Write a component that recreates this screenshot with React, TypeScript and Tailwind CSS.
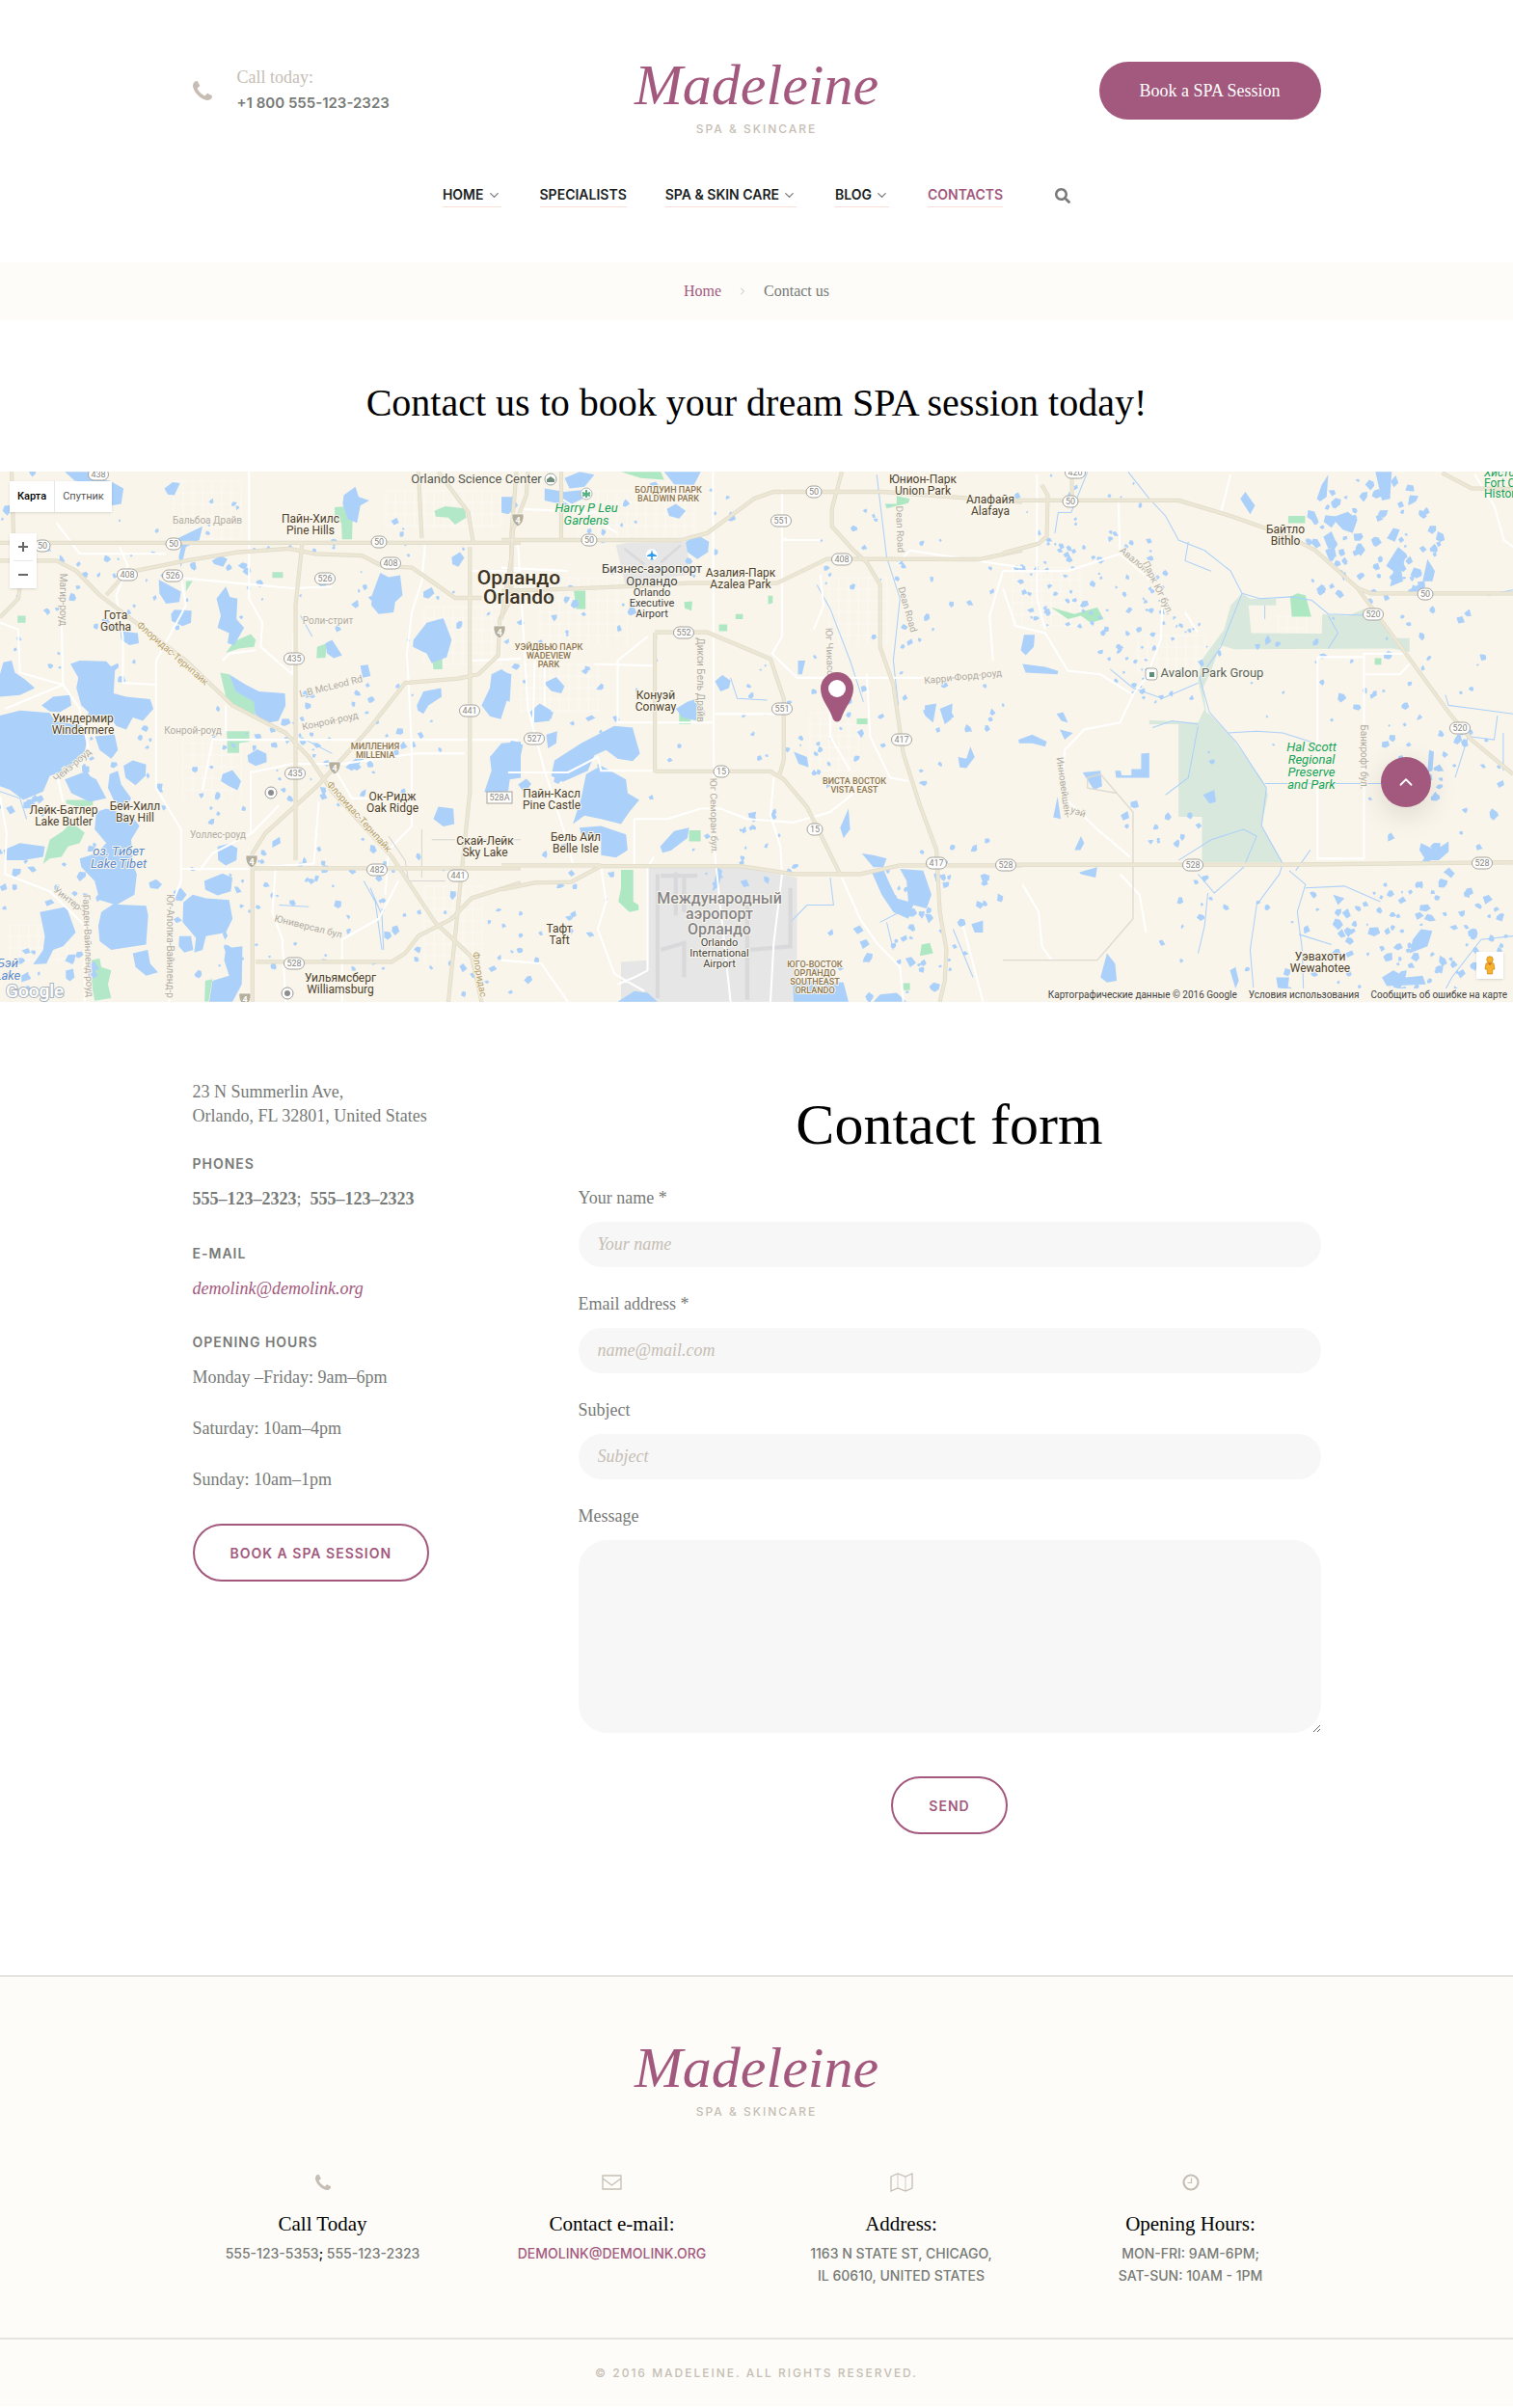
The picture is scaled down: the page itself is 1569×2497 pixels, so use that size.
import type { ReactNode } from 'react'
import { ChevronDown, ChevronRight, ChevronUp } from 'lucide-react'
import { FaSearch } from 'react-icons/fa'

const serif = "font-['Liberation_Serif',serif]"
const sans = 'font-[Inter,sans-serif]'

const navItems = [
  { label: 'HOME', sub: true },
  { label: 'SPECIALISTS' },
  { label: 'SPA & SKIN CARE', sub: true },
  { label: 'BLOG', sub: true },
  { label: 'CONTACTS', active: true },
]

/* ---------- map data ---------- */

// each tile keeps its own drawing units, the transform places it on the map
const TILES = {
  west: 'translate(0 -4) scale(.3444 .3571)',
  center: 'translate(520 -4) scale(.3444 .3571)',
  east: 'translate(1040 -4) scale(.3374 .3571)',
}

const westWater = [
  'M212 570L240 560L320 562L346 590L342 655L380 665L452 672L462 700L430 735L400 725L380 760L350 750L340 735L300 740L245 690L230 640L236 610Z',
  'M0 720L60 705L150 712L165 735L250 750L262 790L250 850L200 880L150 895L130 940L70 965L30 935L0 925Z',
  'M0 600L10 565L35 560L45 595L75 615L105 640L60 660L0 665Z',
  'M125 690L160 665L210 660L215 690L180 710L150 708Z',
  'M286 780L345 775L355 820L335 845L300 820Z',
  'M372 865L400 850L440 862L438 895L408 922L378 900Z',
  'M195 905L250 885L290 905L320 960L270 970L215 945Z',
  'M330 890L355 880L365 920L395 960L380 990L345 970L325 930Z',
  'M290 1000L320 990L395 1010L420 1040L395 1080L400 1150L412 1180L405 1240L350 1270L300 1255L285 1200L245 1160L240 1135L290 1120L320 1090L285 1050Z',
  'M305 1290L340 1268L440 1272L446 1300L440 1385L390 1392L335 1400L300 1375L296 1330Z',
  'M120 1290L200 1275L228 1350L190 1390L160 1400L140 1440L100 1442L130 1400L135 1360Z',
  'M552 1262L580 1240L620 1250L690 1255L700 1310L680 1350L620 1360L610 1400L585 1408L590 1365L550 1320Z',
  'M615 1200L670 1178L700 1190L695 1230L655 1242L618 1225Z',
  'M655 1100L690 1092L715 1105L712 1140L680 1155L657 1140Z',
  'M400 1410L445 1400L452 1440L476 1465L440 1475L408 1450Z',
  'M680 1395L730 1390L728 1500L700 1551L630 1551L640 1490L690 1475L675 1430Z',
  'M540 1360L575 1360L582 1400L555 1408L538 1390Z',
  'M522 1230L545 1220L562 1240L548 1258L525 1256Z',
  'M448 1205L470 1195L488 1210L475 1224L452 1220Z',
  'M690 600L740 630L780 650L858 655L860 690L838 735L800 742L768 715L765 680L710 650Z',
  'M652 380L680 345L692 375L715 380L712 440L735 465L705 515L685 510L690 480L655 465L665 430Z',
  'M1245 500L1285 450L1335 437L1360 500L1345 550L1300 568L1285 540L1243 520Z',
  'M1120 370L1145 305L1170 318L1205 312L1212 370L1190 390L1185 420L1140 425L1118 400Z',
  'M1450 690L1475 640L1480 600L1510 585L1532 600L1535 650L1508 730L1475 722Z',
  'M1475 840L1510 800L1568 795L1568 900L1535 905L1530 940L1458 942L1480 880Z',
  'M1305 1020L1320 984L1365 990L1368 1035L1335 1042Z',
  'M1255 690L1275 650L1328 640L1330 665L1290 690L1275 715L1258 705Z',
  'M745 835L775 818L802 830L803 855L770 866L748 855Z',
  'M670 890L700 878L726 910L715 937L690 925L665 910Z',
  'M195 12H290L300 32L330 38L372 60L365 105L335 110L320 50L225 38Z',
  'M478 325L545 360L540 390L500 395L480 365Z',
  'M515 425L525 412L577 415L575 450L550 460L517 445Z',
  'M362 475L415 480L418 510L390 515L365 500Z',
  'M535 205L610 170L600 210L560 230L545 290L538 260L545 230Z',
  'M1035 80L1070 55L1080 85L1112 95L1085 110L1075 160L1048 150L1032 105Z',
  'M495 60L520 42L542 45L525 80L505 78Z',
  'M638 270L665 255L685 265L672 288L645 280Z',
  'M1360 260L1385 245L1398 262L1380 288L1362 280Z',
  'M1275 360L1300 347L1308 365L1290 380L1275 376Z',
  'M980 510L1000 500L1030 545L1005 553L985 540Z',
  'M10 1110L60 1090L135 1100L130 1130L70 1140L20 1140Z',
  'M1085 575L1108 572L1116 605L1092 610Z',
  'M1040 870L1100 820L1108 835L1060 880Z',
  'M820 1085L842 1072L845 1090L820 1103Z',
]
const westParks = [
  'M663 595L690 600L712 650L768 680L768 720L720 705L680 665Z',
  'M683 765H751V795L720 800V828H685Z',
  'M680 538L705 505L755 483L770 500L765 520L720 525Z',
  'M1308 125L1340 112L1400 118L1404 145L1370 165L1350 145L1312 142Z',
  'M1008 115L1045 112L1062 140L1060 208H1030L1028 160L1008 150Z',
  'M955 520L985 510L980 552L953 553Z',
  'M1303 565L1332 552V585H1305Z',
  'M275 1430L300 1425L305 1450L335 1460L325 1500L335 1540L285 1548L275 1500Z',
  'M198 965H280V980L240 985L200 975Z',
  'M130 1150L150 1080L190 1055L215 1030L255 1060L240 1090L205 1100L185 1130L150 1135Z',
  'M820 303H852V320H820ZM53 430H77V450H53ZM560 330L580 328L560 360ZM618 1490L640 1485L628 1550L616 1550Z',
]
const westRoads = [
  'M0 218H1568',
  'M0 270L170 270L230 300L300 370L560 560L700 690L860 770L930 840L1000 940L1180 1130L1310 1320L1420 1420L1450 1551',
  'M320 370L380 305L560 270L720 245L870 235L950 250L1090 255L1150 285L1240 290L1300 330L1370 378L1450 378',
  'M910 220L890 400V1140',
  'M35 12L42 240L65 310L55 380L0 435',
  'M760 1551V1120L800 1060L960 920L1110 760L1220 625L1380 612L1440 600L1500 545L1505 440L1540 380V190L1555 12',
  'M760 1163H1568',
  'M770 1435H1180L1220 1410L1260 1360L1360 1310L1420 1250L1568 1205',
  'M1415 230V940L1350 1551',
  'M1260 12L1270 205M1320 12L1410 130L1425 218',
]
const westStreets = [
  'M470 930V560L560 400L545 320L880 350L1000 345',
  'M470 930L545 1050V1200L500 1310L510 1551',
  'M360 230L385 285L350 370L370 490V625L470 630',
  'M170 160L240 250H500M185 440L190 630L60 595L55 470L0 450',
  'M15 700L190 630L240 700L270 830L175 905L190 970',
  'M0 955L20 1060L15 1180L150 1230L255 1330V1551',
  'M545 1165H760M755 880V1060M755 885L880 860H1030L1250 830H1400',
  'M610 935L640 790H1560M680 690V765M670 560L690 540L770 530',
  'M750 12V380L790 450L785 520L880 600L885 480',
  'M1280 220L1270 330L1240 420L1225 540L1230 620L1240 820V1040L1170 1110L1160 1240',
  'M830 1160L820 1290L850 1370L860 1551M960 970L945 1150L780 1160',
  'M1030 1551V1370L1140 1310L1200 1200M1420 560L1568 555M1420 300H1568',
  'M600 1170L640 1120L760 1060L840 980M1010 880L1060 960H1160',
]

const centerWater = [
  'M240 800L340 750L395 755L405 790L417 830L395 852L350 845L315 820L280 835L260 880L185 912L150 895L160 850Z',
  'M255 890L300 865L375 905L380 945L415 965L385 1000L360 1035L300 1020L250 1010L215 1035L240 960Z',
  'M235 1045L300 1040L375 1065L380 1110L345 1132L300 1125L300 1080L240 1065Z',
  'M478 1100L520 1055L565 1045L560 1075L510 1112L485 1118Z',
  'M555 215L590 195L625 215L622 245L590 265L560 245Z',
  'M643 620L665 602L690 618L685 640L660 650Z',
  'M128 625L165 608L190 635L180 655L150 648Z',
  'M85 710L115 685L150 705L145 735L100 740Z',
  'M135 775L168 765L165 800L140 815Z',
  'M0 590L30 600L25 680L0 670ZM0 860L30 790L65 805L50 870L0 915Z',
  'M490 12L600 12L580 50L520 48Z',
  'M498 120L525 105L555 125L535 148L505 140Z',
  'M525 700L560 680L590 670L615 712L590 735L545 725Z',
  'M50 920L75 903L90 918L70 945Z',
  'M878 1505L905 1490L1030 1495L1045 1551L880 1551Z',
  'M1115 1175L1150 1165L1165 1200L1190 1250L1225 1260L1220 1200L1200 1165L1270 1170L1295 1240L1280 1280L1240 1270L1225 1310L1180 1290L1145 1240Z',
  'M1020 1045L1045 990L1050 1050L1030 1075Z',
  'M1085 1120L1120 1125L1160 1135L1150 1160L1120 1160Z',
  'M1275 690L1310 685L1300 740L1275 720ZM1320 700L1358 685L1355 730L1335 745Z',
  'M1380 870L1375 840L1400 845L1412 810L1425 840L1400 872Z',
  'M0 85L35 85L50 110L20 135L0 130ZM130 60L190 70L240 65L245 90L200 110L130 95Z',
  'M190 30L235 12L280 20L250 55L205 60Z',
  'M880 825L920 840L925 870L895 860ZM893 560H915L905 600H893Z',
  'M1415 1325L1450 1315V1350L1425 1350Z',
  'M635 1230L650 1160L665 1170L655 1215Z',
  'M350 1551L400 1520L440 1525L470 1551ZM1120 1551L1140 1530L1190 1525L1220 1551Z',
]
const centerParks = [
  'M360 1168H397V1260L413 1270V1285L385 1290L352 1260L360 1220Z',
  'M218 357H253V410H225Z',
  'M535 712H570V745H535ZM705 425H727V440H705ZM655 455H680V475H655ZM565 1053H600V1085H565ZM1070 728H1102V745H1070ZM1210 1497H1230V1517H1210Z',
  'M550 390L575 388L572 415L552 408ZM1155 105H1190V82L1230 90L1225 103L1160 118ZM803 372H817V393L803 397Z',
  'M360 12L480 12L490 35L420 30Z',
  'M1265 1385L1290 1380L1300 1410L1260 1418Z',
]
const centerRoads = [
  'M0 210H540L620 190L760 90L820 70H1150L1568 100',
  'M0 358L200 352L380 345L560 335H830L980 265H1100L1440 266L1568 240',
  'M1025 12L995 120V170L1060 240L1100 275L1140 340V520L1180 630L1210 830L1260 980L1310 1110L1320 1290L1340 1400L1335 1490L1320 1551',
  'M462 480V885M462 478H620L810 555L850 670V850L835 900',
  'M462 882H810L850 905L920 985L1020 1180',
  'M0 1225L100 1205L210 1203L300 1157H720L880 1180H1080L1200 1155H1568',
  'M0 1155H300M180 12V205',
  'M80 12L75 80L35 180L30 260L0 440',
]
const centerStreets = [
  'M637 12L640 1100L690 1551M50 220L80 700L130 880L190 1060L215 1150',
  'M845 60V490L815 540L890 610H1300L1470 600M640 715H845M860 205L845 210H960',
  'M400 1150V1020H500L600 990H660L740 1020L880 1030L990 1000L1080 930',
  'M460 1130L440 1160V1460L400 1480L350 1500M820 900L810 1010L840 1100L845 1180L820 1380L810 1551',
  'M1025 1190L1080 1310L1130 1380L1200 1450L1210 1551',
  'M960 310L970 400L940 470M1100 600L1110 780L1170 900L1225 910',
  'M1190 280L1230 240L1568 290M1480 560L1470 430L1510 300',
  'M20 885H200L290 840L300 880H460M280 570L460 575M130 570V690',
  'M300 1160L315 1260L290 1340L340 1470L430 1520M0 1430L120 1440L200 1551',
  'M990 700V780L1050 880M1390 1330L1450 1551M440 490L350 560V740H637',
  'M0 290L200 300M60 120L290 130M100 560L95 745M180 90L350 190',
]
const centerGround = [
  'M345 225L380 218L560 215L563 310L500 320L490 345L375 350Z',
  'M440 1160H720L890 1190V1551H360V1435L440 1430Z',
]

const eastWater = [
  'M1010 145L1060 128L1090 150L1075 190L1045 180Z',
  'M985 200L1010 185L1028 225L1000 235Z',
  'M1178 285L1215 230L1240 250L1225 300L1230 330L1190 345L1200 300Z',
  'M1290 330L1305 265L1328 300L1320 330Z',
  'M1180 205L1200 175L1220 180L1205 215Z',
  'M55 530L65 485L98 485L95 520L70 545Z',
  'M60 570L130 578L170 590L168 600L70 595Z',
  'M48 790L90 775L135 795L130 810L90 800L50 800Z',
  'M165 715L185 710L200 740L180 735ZM175 760L215 770L190 790Z',
  'M345 880H362L365 893H395V875H425V830L450 828V900H348Z',
  'M245 885L300 880L305 925L280 935Z',
  'M155 1015L168 955L178 1020Z',
  'M1285 1090L1330 1110L1370 1085L1370 1115L1340 1140L1300 1140L1280 1110Z',
  'M615 950L650 935L655 970L635 975Z',
  'M1310 820L1325 825L1320 880L1305 885Z',
  'M1145 12L1195 12L1190 90L1165 95Z',
  'M965 90L980 50L1000 20L995 85L975 98Z',
  'M1165 1480L1200 1460L1240 1480L1290 1475L1300 1500L1180 1505Z',
  'M1285 1340L1320 1345L1305 1390L1250 1410L1260 1370Z',
  'M300 1480L320 1410L345 1440L350 1490L320 1495Z',
  'M220 1110L240 1070L250 1090L238 1110ZM235 1175L290 1160L285 1190L240 1180Z',
  'M730 90L745 70L775 110L760 135ZM805 500L815 485L825 505L808 515Z',
  'M698 1460L715 1450L725 1490L715 1512ZM840 1480L880 1480L875 1515L845 1510Z',
  'M1015 1240L1050 1250L1030 1270Z',
]
const eastRoads = [
  'M0 95H540L700 140L880 200L960 240L1090 350L1130 365H1568',
  'M1090 350L1200 490L1370 710L1440 790L1568 890',
  'M0 1153H850L1568 1146',
  'M212 12V95M120 50L138 80L135 200L110 220L0 248',
  'M1350 15L1440 60L1568 62',
]
const eastStreets = [
  'M0 350L40 460L130 480L200 590L300 600L400 660L440 610L485 500L490 400M400 660L360 740L250 760L190 820L180 950L290 1050L390 1130',
  'M355 100L360 250L460 330M0 300L200 300L360 250M105 20V380L130 470',
  'M967 550V1135H1110V540H1240M1115 600H1220L1250 570M967 550H1110',
  'M1450 20L1510 110L1540 210L1568 230M700 20L670 130',
  'M60 1210L110 1290L120 1390L150 1430M560 420L600 480M360 1180L420 1240L440 1350',
]
const eastRail = ['M0 1430H290L400 1310V1000L300 890L260 900V930L350 945']
const preserve = [
  'M735 365L760 380H840V400H755L763 480L980 482L982 425L1060 430L1110 410H1150L1195 495H1250V535L1200 525L710 527L668 515L640 590L615 640L625 710L640 720L700 780L800 910L815 950L795 1040L860 1145H612V1014H540V745L450 745V733L600 740L620 700L600 620L610 560L680 470L700 400Z',
]
const rivers = [
  'M385 12L450 90L500 140L540 210L620 240L700 300L735 365L670 520L605 610L635 710L720 800L810 930L795 1040L860 1150L850 1180L780 1270L760 1400L770 1510',
  'M735 365L790 380L890 375L950 385L1000 425L1150 430M1000 430L1030 480L1000 525M805 400V440',
  'M690 770L780 765L860 770L960 800M805 917H1170M540 1140L640 1080L740 1050L780 1070L740 1160L650 1235L600 1180',
  'M330 585L400 640L490 670L600 625M600 750L570 900L500 950M460 755L520 735L600 745',
  'M630 1235L620 1330L600 1410M880 1170L930 1210L905 1290L920 1400L925 1551',
  'M930 1220L1050 1215L1160 1260M910 1355L1010 1385M160 190L170 130L210 130L260 12M570 215L560 270L640 300',
  'M1360 660L1370 690L1568 715M1520 720L1510 790L1430 780L1390 900M1538 770V880M1568 355L1490 370',
  'M945 1110L900 1170M1340 1551L1380 1480L1470 1370L1568 1360',
]
const centerRivers = [
  'M950 340L990 410L1050 560L1090 680M1130 20L1160 260L1200 380L1180 560L1195 690M690 610L710 670L800 675',
  'M870 1320L920 1270L1000 1270L990 1190M1160 1320L1180 1400M1360 1340L1420 1480M1140 1320L1220 1280',
]
const westRivers = ['M1095 1200L1130 1260L1150 1400M1115 1220L1150 1300L1155 1400M900 780L1000 830M840 1270L930 1275M905 430L940 490', 'M0 940L60 960L80 1020']

// scattered ponds: [cx, cy, rx, ry, count, size]
const PONDS = [
  [1420, 75, 75, 70, 75, 7],
  [1450, 190, 90, 75, 30, 5],
  [1490, 330, 75, 80, 35, 6],
  [1470, 490, 95, 80, 110, 6],
  [1130, 110, 85, 60, 75, 4],
  [1200, 190, 60, 60, 45, 4],
  [1290, 480, 95, 70, 20, 5],
  [1120, 25, 80, 30, 14, 4],
  [1300, 240, 90, 80, 12, 4],
  [1200, 370, 50, 30, 12, 5],
  [980, 420, 70, 50, 30, 6],
  [920, 500, 90, 50, 26, 6],
  [950, 240, 100, 90, 26, 5],
  [940, 100, 95, 80, 26, 4],
  [830, 260, 60, 80, 30, 4],
  [770, 390, 60, 50, 22, 5],
  [670, 60, 120, 60, 22, 5],
  [600, 180, 90, 80, 26, 5],
  [570, 440, 70, 70, 16, 5],
  [640, 300, 80, 60, 12, 5],
  [350, 280, 110, 70, 50, 5],
  [380, 450, 100, 70, 42, 5],
  [420, 110, 110, 70, 26, 5],
  [210, 100, 110, 80, 34, 5],
  [70, 180, 75, 110, 32, 5],
  [60, 340, 90, 80, 34, 6],
  [50, 470, 80, 70, 30, 7],
  [220, 300, 80, 90, 26, 5],
  [240, 460, 60, 80, 28, 5],
  [30, 60, 40, 60, 10, 5],
  [500, 500, 60, 50, 14, 5],
]

function buildPonds() {
  let seed = 7
  const rand = () => {
    seed = (seed * 16807) % 2147483647
    return seed / 2147483647
  }
  let d = ''
  for (const [cx, cy, rx, ry, count, size] of PONDS) {
    for (let i = 0; i < count; i++) {
      const a = rand() * Math.PI * 2
      const r = Math.sqrt(rand())
      const x = cx + Math.cos(a) * r * rx
      const y = cy + Math.sin(a) * r * ry
      const sides = 4 + Math.floor(rand() * 3)
      const s = size * (0.35 + rand() * 0.75)
      for (let k = 0; k < sides; k++) {
        const t = (k / sides) * Math.PI * 2 + rand() * 0.6
        const q = s * (0.5 + rand() * 0.6)
        d += `${k ? 'L' : 'M'}${(x + Math.cos(t) * q).toFixed(1)} ${(y + Math.sin(t) * q).toFixed(1)}`
      }
      d += 'Z'
    }
  }
  return d
}

// small residential street grids
function buildGrids() {
  const blocks = [
    [180, 10, 70, 60], [400, 20, 120, 40], [560, 110, 90, 70], [440, 140, 80, 60], [540, 200, 80, 50],
    [860, 110, 60, 70], [840, 250, 50, 60], [1050, 100, 70, 60], [1180, 170, 70, 40], [190, 270, 60, 70],
    [600, 20, 120, 50], [1325, 150, 30, 18], [10, 470, 60, 40], [440, 430, 60, 80],
  ]
  let d = ''
  for (const [x, y, w, h] of blocks) {
    for (let i = 0; i <= w; i += 10) d += `M${x + i} ${y}v${h}`
    for (let j = 0; j <= h; j += 12) d += `M${x} ${y + j}h${w}`
  }
  return d
}

type Label = [x: number, y: number, lines: string[], rotate?: number]

const towns: Label[] = [
  [322, 53, ['Пайн-Хилс', 'Pine Hills']],
  [120, 153, ['Гота', 'Gotha']],
  [86, 260, ['Уиндермир', 'Windermere']],
  [66, 355, ['Лейк-Батлер', 'Lake Butler']],
  [140, 351, ['Бей-Хилл', 'Bay Hill']],
  [407, 341, ['Ок-Ридж', 'Oak Ridge']],
  [503, 387, ['Скай-Лейк', 'Sky Lake']],
  [353, 529, ['Уильямсберг', 'Williamsburg']],
  [957, 12, ['Юнион-Парк', 'Union Park']],
  [1027, 33, ['Алафайя', 'Alafaya']],
  [768, 109, ['Азалия-Парк', 'Azalea Park']],
  [680, 236, ['Конуэй', 'Conway']],
  [572, 338, ['Пайн-Касл', 'Pine Castle']],
  [597, 383, ['Бель Айл', 'Belle Isle']],
  [580, 478, ['Тафт', 'Taft']],
  [1333, 64, ['Байтло', 'Bithlo']],
  [1369, 507, ['Уэвахоти', 'Wewahotee']],
]
const districts: Label[] = [
  [389, 288, ['МИЛЛЕНИЯ', 'MILLENIA']],
  [693, 22, ['БОЛДУИН ПАРК', 'BALDWIN PARK']],
  [569, 185, ['УЭЙДВЬЮ ПАРК', 'WADEVIEW', 'PARK']],
  [886, 324, ['ВИСТА ВОСТОК', 'VISTA EAST']],
  [845, 514, ['ЮГО-ВОСТОК', 'ОРЛАНДО', 'SOUTHEAST', 'ORLANDO']],
]
const parks: Label[] = [
  [608, 42, ['Harry P Leu', 'Gardens']],
  [1360, 290, ['Hal Scott', 'Regional', 'Preserve', 'and Park']],
]
const lakes: Label[] = [
  [123, 398, ['оз. Тибет', 'Lake Tibet']],
  [8, 514, ['Бэй', 'Lake']],
]
const streets: Label[] = [
  [215, 54, ['Бальбоа Драйв']],
  [340, 158, ['Роли-стрит']],
  [200, 272, ['Конрой-роуд']],
  [344, 226, ['L B McLeod Rd'], -14],
  [343, 262, ['Конрой-роуд'], -12],
  [226, 380, ['Уоллес-роуд']],
  [319, 475, ['Юниверсал бул'], 14],
  [62, 133, ['Магир-роуд'], 90],
  [69, 446, ['Уинтер-'], 38],
  [88, 492, ['Гарден-Вайнленд-роуд'], 88],
  [173, 492, ['Юг-Апопка-Вайнленд-р'], 90],
  [77, 307, ['Чейз-роуд'], -40],
  [930, 60, ['Dean Road'], 88],
  [938, 144, ['Dean Road'], 74],
  [999, 216, ['Карри-Форд-роуд'], -6],
  [857, 187, ['Юг Чикасо'], 88],
  [723, 216, ['Дикси Бель Драйв'], 90],
  [737, 357, ['Юг Семоран бул.'], 89],
  [1411, 296, ['Банкрофт бул.'], 90],
  [1174, 94, ['Авалон'], 40],
  [1198, 122, ['Парк Юг бул.'], 64],
  [1100, 328, ['Инновейшен-'], 82],
  [1117, 356, ['уэй'], 20],
]
const turnpike: Label[] = [
  [177, 191, ['Флоридас-Тернпайк'], 41],
  [370, 360, ['Флоридас-Тернпайк'], 48],
  [494, 522, ['Флоридас'], 80],
]
const shields: [number, number, string][] = [
  [102, 3, '438'], [44, 77, '50'], [180, 75, '50'], [132, 107, '408'], [179, 108, '526'], [393, 73, '50'],
  [405, 95, '408'], [337, 111, '526'], [305, 194, '435'], [306, 313, '435'], [518, 338, '528A'],
  [487, 248, '441'], [475, 419, '441'], [391, 413, '482'], [305, 510, '528'], [844, 21, '50'],
  [810, 51, '551'], [611, 71, '50'], [873, 91, '408'], [709, 167, '552'], [811, 246, '551'],
  [554, 277, '527'], [935, 278, '417'], [748, 311, '15'], [845, 371, '15'], [971, 406, '417'],
  [1043, 408, '528'], [1115, 1, '420'], [1110, 31, '50'], [1478, 127, '50'], [1424, 148, '520'],
  [1514, 266, '520'], [1237, 408, '528'], [1537, 406, '528'],
]
const interstates = [[537, 50], [518, 166], [347, 307], [261, 404], [254, 547]]

const ponds = buildPonds()
const grids = buildGrids()

function Labels({ items, size, step, fill, italic, weight = 400 }: {
  items: Label[]
  size: number
  step: number
  fill: string
  italic?: boolean
  weight?: number
}) {
  return (
    <g fontSize={size} fill={fill} fontStyle={italic ? 'italic' : undefined} fontWeight={weight}
      textAnchor="middle" stroke="#faf6ea" strokeWidth="2" strokeLinejoin="round" paintOrder="stroke">
      {items.map(([x, y, lines, rotate]) => (
        <g key={`${x}-${y}`} transform={rotate ? `rotate(${rotate} ${x} ${y})` : undefined}>
          {lines.map((line, i) => (
            <text key={line} x={x} y={y + i * step}>{line}</text>
          ))}
        </g>
      ))}
    </g>
  )
}

function Roads({ d, main }: { d: string[]; main?: boolean }) {
  const path = d.join('')
  return main ? (
    <g fill="none" strokeLinejoin="round">
      <path d={path} stroke="#e0dac8" strokeWidth="12" />
      <path d={path} stroke="#ece6d5" strokeWidth="8" />
    </g>
  ) : (
    <path d={path} fill="none" stroke="#fff" strokeWidth="6" strokeLinejoin="round" />
  )
}

function MapCanvas() {
  return (
    <svg viewBox="0 0 1569 550" preserveAspectRatio="xMidYMid slice" className="block h-full w-full font-[Roboto,sans-serif]" role="img" aria-label="Orlando">
      <rect width="1569" height="550" fill="#f9f5ea" />
      <path d={grids} stroke="#fff" strokeWidth="1" opacity=".55" />
      <g transform={TILES.center}><path d={centerGround.join('')} fill="#e6e6e6" /></g>
      <g transform={TILES.east}>
        <path d={preserve.join('')} fill="#d9e8dc" />
        <path d="M883 375L905 365L930 370L948 433H888ZM877 140H929V161H877ZM1143 553H1163V572H1143ZM148 405L220 425L290 405L310 440L270 450L240 430L200 440Z" fill="#aee8c3" />
      </g>
      <g transform={TILES.west}><path d={westParks.join('')} fill="#b2e8c8" /></g>
      <g transform={TILES.center}><path d={centerParks.join('')} fill="#aee8c3" /></g>
      <path d={ponds} fill="#abd0fa" />
      <g fill="#abd0fa">
        <path transform={TILES.west} d={westWater.join('')} />
        <path transform={TILES.center} d={centerWater.join('')} />
        <path transform={TILES.east} d={eastWater.join('')} />
      </g>
      <g fill="none" stroke="#abd0fa" strokeWidth="3">
        <path transform={TILES.west} d={westRivers.join('')} />
        <path transform={TILES.center} d={centerRivers.join('')} />
        <path transform={TILES.east} d={rivers.join('')} />
      </g>
      <g transform={TILES.center} fill="none" stroke="#d9d9db" strokeWidth="12">
        <path d="M470 1180V1540M525 1175V1300M550 1180V1290M740 1270V1545M750 1400L870 1390V1220M480 1185H590M480 1400L550 1380V1480" />
        <path d="M370 235L430 280M540 225L480 275" strokeWidth="7" />
      </g>
      <g transform={TILES.west}><Roads d={westStreets} /></g>
      <g transform={TILES.center}><Roads d={centerStreets} /></g>
      <g transform={TILES.east}><Roads d={eastStreets} /></g>
      <path transform={TILES.east} d={eastRail.join('')} fill="none" stroke="#dcdad2" strokeWidth="4" />
      <path transform={TILES.west} d="M1170 1070L1220 1140L1230 1200H1340M1270 1050V1190M1300 1080H1370M1568 1080H1380" fill="none" stroke="#d6d6d6" strokeWidth="3" />
      <g transform={TILES.west}><Roads d={westRoads} main /></g>
      <g transform={TILES.center}><Roads d={centerRoads} main /></g>
      <g transform={TILES.east}><Roads d={eastRoads} main /></g>

      <Labels items={streets} size={10} step={11} fill="#b0aca6" />
      <Labels items={turnpike} size={10} step={11} fill="#b5a06a" />

      <g fontSize="9" textAnchor="middle" fill="#8a8780">
        {shields.map(([x, y, t]) => {
          const w = t.length * 5 + 6
          return (
            <g key={`${x}-${y}`}>
              <rect x={x - w / 2} y={y - 6} width={w} height="12" rx={t === '528A' ? 0 : 6} fill="#fff" stroke="#a5a29b" />
              <text x={x} y={y + 3}>{t}</text>
            </g>
          )
        })}
      </g>
      {interstates.map(([x, y]) => (
        <g key={`${x}-${y}`}>
          <path d={`M${x - 6} ${y - 6}h12q1 9-6 13q-7-4-6-13z`} fill="#b6af9c" stroke="#fff" strokeWidth=".7" />
          <text x={x} y={y + 4} fontSize="9" fontWeight="700" textAnchor="middle" fill="#fff">4</text>
        </g>
      ))}

      <Labels items={towns} size={12} step={12} fill="#4e4330" />
      <Labels items={districts} size={9} step={9} fill="#8d7654" weight={500} />
      <Labels items={parks} size={13} step={13} fill="#14a35a" italic />
      <Labels items={lakes} size={13} step={13} fill="#5b8bd0" italic />
      <Labels items={[[538, 117, ['Орландо', 'Orlando']]]} size={21} step={20} fill="#3d3425" weight={500} />
      <Labels items={[[494, 12, ['Orlando Science Center']]]} size={13} step={12} fill="#55564f" />
      <Labels items={[[676, 105, ['Бизнес-аэропорт', 'Орландо']]]} size={13} step={13} fill="#444" />
      <Labels items={[[676, 129, ['Orlando', 'Executive', 'Airport']], [746, 492, ['Orlando', 'International', 'Airport']]]} size={11} step={11} fill="#444" />
      <Labels items={[[746, 448, ['Международный', 'аэропорт', 'Орландо']]]} size={16} step={16} fill="#85858a" weight={500} />
      <Labels items={[[1257, 213, ['Avalon Park Group']]]} size={13} step={13} fill="#5c6762" />

      <g fontSize="12" fill="#14a35a">
        <text x="1539" y="5" fontStyle="italic">Хисто</text>
        <text x="1539" y="16">Fort C</text>
        <text x="1539" y="27">Histor</text>
      </g>

      {/* points of interest */}
      <rect x="1188" y="204" width="12" height="12" rx="3" fill="#fff" stroke="#a9aaa4" />
      <rect x="1192" y="208" width="5" height="5" fill="#5d9079" />
      <circle cx="571" cy="8" r="6" fill="#fff" stroke="#9aa09b" />
      <path d="M567 8l4-3 4 3v3h-8z" fill="#6f8f7c" />
      <circle cx="608" cy="23" r="6" fill="#fff" stroke="#b5bab5" />
      <path d="M608 19v8M604 22l8 3M612 22l-8 3" stroke="#57b184" strokeWidth="2" />
      <circle cx="676" cy="86" r="6" fill="#fff" />
      <path d="M676 81l1 4 4 2v1h-4l-.4 2 1.400 1.500h-4l1.400-1.500-.4-2h-4v-1l4-2z" fill="#2a9df0" />
      {[[281, 333], [298, 541]].map(([x, y]) => (
        <g key={x}>
          <circle cx={x} cy={y} r="6" fill="#fff" stroke="#9a9a9a" />
          <circle cx={x} cy={y} r="3" fill="#8d8d8d" />
        </g>
      ))}

      {/* marker */}
      <path d="M868 208a17 17 0 0 1 17 17c0 12-9 19-13 32q-4 5-8 0c-4-13-13-20-13-32a17 17 0 0 1 17-17z" fill="#a2597d" />
      <circle cx="868" cy="225" r="9" fill="#fff" />

      <text x="6" y="545" fontSize="19" fontWeight="500" fill="#fff" stroke="#a9b4bd" strokeWidth="2" paintOrder="stroke">Google</text>
    </svg>
  )
}

/* ---------- page parts ---------- */

function PhoneIcon({ size }: { size: number }) {
  return (
    <svg width={size} height={size} viewBox="0 0 1408 1408" fill="#c6beb4" aria-hidden="true">
      <path d="M1408 1112q0 27-10 70.500t-21 68.500q-21 50-122 106-94 51-186 51-27 0-53-3.500t-57.500-12.500-47-14.500-55.500-20.500-49-18q-98-35-175-83-127-79-264-216t-216-264q-48-77-83-175-3-9-18-49t-20.500-55.500-14.500-47-12.500-57.500-3.500-53q0-92 51-186 56-101 106-122 25-11 68.500-21t70.500-10q14 0 21 3 18 6 53 76 11 19 30 54t35 63.500 31 53.500q3 4 17.500 25t21.500 35.500 7 28.500q0 20-28.500 50t-62 55-62 53-28.500 46q0 9 5 22.500t8.500 20.500 14 24 11.500 19q76 137 174 235t235 174q2 1 19 11.500t24 14 20.500 8.500 22.500 5q18 0 46-28.500t53-62 55-62 50-28.500q14 0 28.500 7t35.500 21.500 25 17.500q25 15 53.500 31t63.500 35 54 30q70 35 76 53 3 7 3 21z" />
    </svg>
  )
}

function Logo() {
  return (
    <a href="#" className="flex flex-col items-center">
      <span className={`${serif} text-[60px] leading-[76px] italic text-[#a2597d]`}>Madeleine</span>
      <span className={`${sans} text-xs leading-4 font-medium tracking-[2px] text-[#c6beb4]`}>SPA &amp; SKINCARE</span>
    </a>
  )
}

function MapSection() {
  return (
    <section className="relative h-[550px] overflow-hidden">
      <MapCanvas />

      <div className="absolute top-[10px] left-[10px] flex h-8 bg-white font-[Roboto,sans-serif] text-[11px] shadow-sm">
        <button type="button" className="px-2 font-medium text-black">Карта</button>
        <button type="button" className="border-l border-gray-200 px-2 text-[#565656]">Спутник</button>
      </div>

      <div className="absolute top-16 left-[10px] flex w-7 flex-col items-center bg-white shadow-sm">
        <button type="button" aria-label="Увеличить" className="flex h-7 w-7 items-center justify-center">
          <svg width="10" height="10" viewBox="0 0 10 10"><path d="M5 0v10M0 5h10" stroke="#666" strokeWidth="2" /></svg>
        </button>
        <span className="h-px w-5 bg-gray-200" />
        <button type="button" aria-label="Уменьшить" className="flex h-7 w-7 items-center justify-center">
          <svg width="10" height="10" viewBox="0 0 10 10"><path d="M0 5h10" stroke="#666" strokeWidth="2" /></svg>
        </button>
      </div>

      <button type="button" aria-label="Street View" className="absolute right-[10px] bottom-6 flex h-7 w-7 items-center justify-center bg-white shadow-sm">
        <svg width="14" height="20" viewBox="0 0 14 20">
          <path d="M3 8q4-2 8 0l1 6-2 0-.5 5h-5L4 14H2z" fill="#f7b32b" stroke="#c9851b" strokeWidth=".7" />
          <circle cx="7" cy="4" r="3.300" fill="#f7b32b" stroke="#c9851b" strokeWidth=".7" />
          <path d="M5 8l2 2 2-2z" fill="#d9622b" />
        </svg>
      </button>

      <div className="absolute right-0 bottom-0 flex gap-3 bg-[#f9f5ea] px-[6px] font-[Roboto,sans-serif] text-[10px] leading-[14px] text-[#444]">
        <span>Картографические данные © 2016 Google</span>
        <a href="#">Условия использования</a>
        <a href="#">Сообщить об ошибке на карте</a>
      </div>

      <a href="#top" aria-label="Наверх" className="absolute top-[296px] right-[85px] flex h-[52px] w-[52px] items-center justify-center rounded-full bg-[#a2597d] text-white shadow-[0_8px_30px_rgba(0,0,0,0.12)]">
        <ChevronUp size={22} strokeWidth={2} />
      </a>
    </section>
  )
}

function Field({ id, label, children }: { id: string; label: string; children: ReactNode }) {
  return (
    <div className="mb-[26px] flex flex-col">
      <label htmlFor={id} className="mb-3 text-[18px] leading-[25px]">{label}</label>
      {children}
    </div>
  )
}

const inputClass = 'h-[47px] rounded-full bg-[#f7f7f7] px-5 text-[18px] outline-none placeholder:italic placeholder:text-[#c6beb4]'
const outlineBtn = `${sans} h-[60px] rounded-full border-2 border-[#a2597d] px-[37px] text-[14px] font-semibold tracking-[1px] text-[#a2597d]`
const sideTitle = `${sans} text-[14px] leading-6 font-semibold tracking-[1px]`

function FooterItem({ icon, title, children }: { icon: ReactNode; title: string; children: ReactNode }) {
  return (
    <div className="flex flex-col items-center text-center">
      <div className="flex h-6 items-center text-[#c6beb4]">{icon}</div>
      <h3 className="mt-[18px] text-[21px] leading-[26px] text-black">{title}</h3>
      <div className={`${sans} mt-[6px] text-[14px] leading-[23px] font-medium`}>{children}</div>
    </div>
  )
}

export default function App() {
  return (
    <div id="top" className={`${serif} bg-white text-[#777a77]`}>
      <header className="mx-auto h-[272px] max-w-[1200px] px-[15px] pt-[50px]">
        <div className="grid grid-cols-3 items-start">
          <div className="flex items-center gap-[26px] pt-[18px]">
            <PhoneIcon size={20} />
            <div>
              <p className="text-[18px] leading-[25px] text-[#c6beb4]">Call today:</p>
              <a href="tel:+18005551232323" className={`${sans} block text-[15px] leading-[27px] font-semibold`}>+1 800 555-123-2323</a>
            </div>
          </div>
          <Logo />
          <div className="flex justify-end pt-[14px]">
            <button type="button" className="h-[60px] rounded-full bg-[#a2597d] px-[42px] text-[18px] text-white">Book a SPA Session</button>
          </div>
        </div>

        <nav className={`${sans} mt-12 flex items-center justify-center gap-10 text-[14px] font-semibold`}>
          {navItems.map((item) => (
            <a
              key={item.label}
              href="#"
              className={`flex items-center gap-[3px] border-b border-[#fadfd9] leading-6 ${item.active ? 'text-[#a2597d]' : 'text-[#1b1e1e]'}`}
            >
              {item.label}
              {item.sub && <ChevronDown size={15} className="text-[#777a77]" />}
            </a>
          ))}
          <button type="button" aria-label="Search" className="ml-[14px]"><FaSearch size={16} /></button>
        </nav>
      </header>

      <nav className="flex h-[60px] items-center justify-center gap-4 bg-[#fdfcf8] text-[16px]" aria-label="Breadcrumb">
        <a href="#" className="text-[#a2597d]">Home</a>
        <ChevronRight size={12} className="text-[#c6beb4]" />
        <span>Contact us</span>
      </nav>

      <h1 className="px-4 pt-[62px] pb-[47px] text-center text-[40px] leading-[48px] text-black">
        Contact us to book your dream SPA session today!
      </h1>

      <MapSection />

      <main className="mx-auto flex max-w-[1200px] px-[15px] pt-[81px] pb-[146px]">
        <div className="w-[400px] shrink-0 text-[18px] leading-[25px]">
          <p>23 N Summerlin Ave,<br />Orlando, FL 32801, United States</p>
          <h2 className={`${sideTitle} mt-[25px]`}>PHONES</h2>
          <p className="mt-3"><b>555–123–2323</b>;&nbsp; <b>555–123–2323</b></p>
          <h2 className={`${sideTitle} mt-8`}>E-MAIL</h2>
          <a href="mailto:demolink@demolink.org" className="mt-3 inline-block italic text-[#a2597d]">demolink@demolink.org</a>
          <h2 className={`${sideTitle} mt-[31px]`}>OPENING HOURS</h2>
          <p className="mt-3">Monday –Friday: 9am–6pm</p>
          <p className="mt-7">Saturday: 10am–4pm</p>
          <p className="mt-7">Sunday: 10am–1pm</p>
          <button type="button" className={`${outlineBtn} mt-[33px]`}>BOOK A SPA SESSION</button>
        </div>

        <form className="min-w-0 flex-1">
          <h2 className="pt-[10px] text-center text-[60px] leading-[72px] text-black">Contact form</h2>
          <div className="mt-7">
            <Field id="name" label="Your name *">
              <input id="name" type="text" placeholder="Your name" className={inputClass} />
            </Field>
            <Field id="email" label="Email address *">
              <input id="email" type="email" placeholder="name@mail.com" className={inputClass} />
            </Field>
            <Field id="subject" label="Subject">
              <input id="subject" type="text" placeholder="Subject" className={inputClass} />
            </Field>
            <Field id="message" label="Message">
              <textarea id="message" className="h-[200px] rounded-[30px] bg-[#f7f7f7] px-5 py-3 text-[18px] outline-none" />
            </Field>
          </div>
          <div className="mt-[45px] flex justify-center">
            <button type="submit" className={outlineBtn}>SEND</button>
          </div>
        </form>
      </main>

      <footer className="border-t-2 border-[#e4e4e0] bg-[#fdfcf8]">
        <div className="mx-auto max-w-[1200px] pt-14 pb-[53px]">
          <Logo />
          <div className="mt-[53px] grid grid-cols-4">
            <FooterItem icon={<PhoneIcon size={16} />} title="Call Today">
              <a href="tel:5551235353">555-123-5353</a><span className="text-black">;</span> <a href="tel:5551232323">555-123-2323</a>
            </FooterItem>
            <FooterItem
              icon={
                <svg width="21" height="16" viewBox="0 0 21 16" fill="none" stroke="currentColor" strokeWidth="1.300">
                  <path d="M1 1h19v14H1zM1 4l9.500 7L20 4" />
                </svg>
              }
              title="Contact e-mail:"
            >
              <a href="mailto:demolink@demolink.org" className="text-[#a2597d]">DEMOLINK@DEMOLINK.ORG</a>
            </FooterItem>
            <FooterItem
              icon={
                <svg width="24" height="20" viewBox="0 0 24 20" fill="none" stroke="currentColor" strokeWidth="1.300">
                  <path d="M1 4l7-3 8 3 7-3v15l-7 3-8-3-7 3z" />
                  <path d="M8 1v15M16 4v15" strokeWidth=".8" />
                </svg>
              }
              title="Address:"
            >
              1163 N STATE ST, CHICAGO,<br />IL 60610, UNITED STATES
            </FooterItem>
            <FooterItem
              icon={
                <svg width="18" height="18" viewBox="0 0 18 18" fill="none" stroke="currentColor">
                  <circle cx="9" cy="9" r="7.500" strokeWidth="2.200" />
                  <path d="M9.500 4.500v5H5.500" strokeWidth="1.200" />
                </svg>
              }
              title="Opening Hours:"
            >
              MON-FRI: 9AM-6PM;<br />SAT-SUN: 10AM - 1PM
            </FooterItem>
          </div>
        </div>
        <p className={`${sans} border-t-2 border-[#e4e4e0] py-[23px] text-center text-xs leading-[23px] font-medium tracking-[2px] text-[#c6beb4]`}>
          © 2016 MADELEINE. ALL RIGHTS RESERVED.
        </p>
      </footer>
    </div>
  )
}
